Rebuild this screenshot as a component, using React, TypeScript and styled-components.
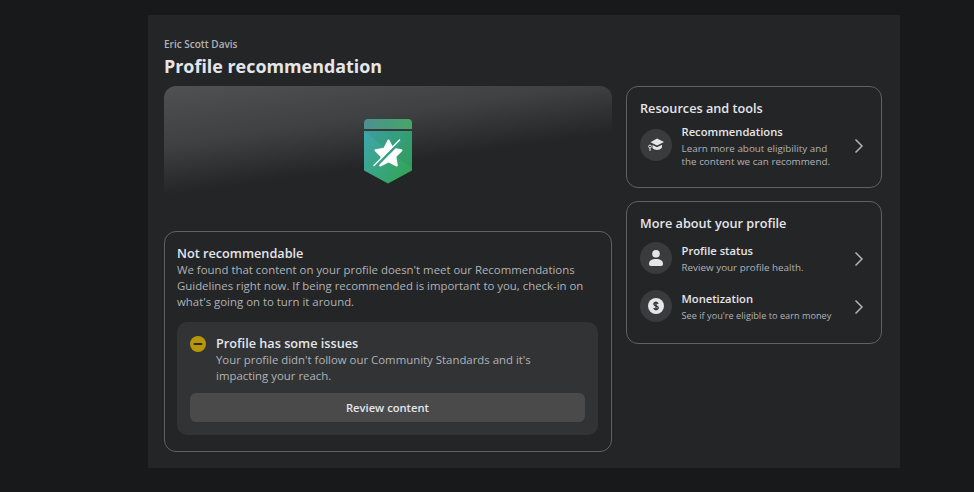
import React from "react";
import styled, { createGlobalStyle } from "styled-components";

const Global = createGlobalStyle`
  html, body { margin: 0; padding: 0; background: #18191a; height: 100%; overflow: hidden; }
  body { font-family: "Open Sans", "Noto Sans", "Liberation Sans", sans-serif; }
  * { box-sizing: border-box; }
`;

const Page = styled.div`
  width: 974px;
  height: 492px;
  padding: 15px 74px 24px 148px;
`;

const Panel = styled.main`
  width: 752px;
  height: 453px;
  background: #242526;
  padding: 23px 18px 16px 16px;
`;

const Owner = styled.div`
  font-size: 10px;
  line-height: 12px;
  font-weight: 600;
  color: #b0b3b8;
`;

const Title = styled.h1`
  margin: 3px 0 7px;
  font-size: 17.9px;
  line-height: 26px;
  font-weight: 700;
  color: #e4e6eb;
`;

const Columns = styled.div`
  display: grid;
  grid-template-columns: 448px 256px;
  column-gap: 14px;
`;

const LeftColumn = styled.div`
  display: flex;
  flex-direction: column;
  gap: 5px;
`;

const RightColumn = styled.div`
  display: flex;
  flex-direction: column;
  gap: 13px;
`;

const Hero = styled.div`
  height: 140px;
  border-radius: 12px 12px 0 0;
  background: linear-gradient(172deg, #505153 0%, #3f4042 30%, #242526 54%);
  display: flex;
  justify-content: center;
  padding-top: 33px;
`;

const Card = styled.section`
  border: 1px solid #606164;
  border-radius: 12px;
`;

const StatusCard = styled(Card)`
  height: 221px;
  padding: 13px 13px 16px 12px;
`;

const CardHeading = styled.h2`
  margin: 0;
  font-size: 12.7px;
  line-height: 17px;
  font-weight: 600;
  color: #e4e6eb;
`;

const BodyText = styled.p`
  margin: 0;
  font-size: 11.4px;
  line-height: 16px;
  color: #b0b3b8;
`;

const IssueBox = styled.div`
  margin-top: 12px;
  height: 113px;
  border-radius: 10px;
  background: #323335;
  padding: 13px;
`;

const IssueRow = styled.div`
  display: flex;
  gap: 10px;
`;

const IssueText = styled.div`
  flex: 1;
`;

const IssueIconSlot = styled.div`
  width: 16px;
  height: 16px;
  flex: none;
`;

const ReviewButton = styled.button`
  display: block;
  width: 100%;
  height: 29px;
  margin-top: 9px;
  border: 0;
  border-radius: 6px;
  background: #4a4a4b;
  color: #e4e6eb;
  font-family: inherit;
  font-size: 11.2px;
  font-weight: 600;
`;

const ToolsCard = styled(Card)<{ $height: number }>`
  height: ${(p) => p.$height}px;
  padding: 13px 13px 0;
`;

const ItemList = styled.div<{ $top: number }>`
  display: flex;
  flex-direction: column;
  gap: 16px;
  margin-top: ${(p) => p.$top}px;
`;

const Item = styled.div`
  display: flex;
  align-items: center;
  min-height: 32px;
`;

const IconCircle = styled.div`
  width: 32px;
  height: 32px;
  border-radius: 50%;
  background: #3a3b3c;
  display: flex;
  align-items: center;
  justify-content: center;
  flex: none;
`;

const ItemText = styled.div<{ $pad?: number }>`
  margin-left: 9.5px;
  flex: 1;
  padding-top: ${(p) => p.$pad ?? 0}px;
`;

const ItemTitle = styled.div`
  font-size: 11.2px;
  line-height: 16px;
  margin-bottom: 2px;
  font-weight: 600;
  color: #e4e6eb;
`;

const ItemSub = styled.div<{ $size?: number }>`
  font-size: ${(p) => p.$size ?? 9.85}px;
  line-height: 13px;
  color: #b0b3b8;
`;

const Chevron = styled.svg`
  width: 10px;
  height: 16px;
  flex: none;
  margin: 2px 4px 0 0;
`;

const ChevronRight = () => (
  <Chevron viewBox="0 0 10 16" fill="none">
    <path d="M1.500 1.500 L8 8 L1.500 14.500" stroke="#b0b3b8" strokeWidth="1.500" />
  </Chevron>
);

const CapIcon = () => (
  <svg width="18" height="16" viewBox="0 0 18 16">
    <path d="M10 1.500 17 5 10 8.500 3.500 5.200Z" fill="#e4e6eb" />
    <path d="M5.500 8 10 10.200 15 7.800V10.500C13.500 12.300 11.800 13 10 13 8.300 13 6.800 12.500 5.500 11.300Z" fill="#e4e6eb" />
    <circle cx="3" cy="9.500" r="1.400" fill="none" stroke="#e4e6eb" strokeWidth="1" />
    <path d="M3 11V14" stroke="#e4e6eb" strokeWidth="1" />
  </svg>
);

const PersonIcon = () => (
  <svg width="16" height="18" viewBox="0 0 16 18">
    <circle cx="8" cy="4.800" r="3.800" fill="#e4e6eb" />
    <path d="M1 15C1 11.500 3.500 10 8 10 12.500 10 15 11.500 15 15 15 16.200 14.300 17 13 17H3C1.700 17 1 16.200 1 15Z" fill="#e4e6eb" />
  </svg>
);

const DollarIcon = () => (
  <svg width="16" height="16" viewBox="0 0 18 18">
    <circle cx="9" cy="9" r="9" fill="#e4e6eb" />
    <path
      d="M11.400 6.600C11 5.600 10.100 5.100 9 5.100 7.600 5.100 6.700 5.900 6.700 7 6.700 9.600 11.500 8.300 11.500 11 11.500 12.100 10.500 12.900 9 12.900 7.800 12.900 6.900 12.300 6.500 11.300M9 3.800V14.200"
      fill="none"
      stroke="#303132"
      strokeWidth="1.500"
    />
  </svg>
);

const MinusIcon = () => (
  <svg width="16" height="16" viewBox="0 0 16 16">
    <circle cx="8" cy="8" r="8" fill="#b8960c" />
    <rect x="3.500" y="7" width="9" height="2" rx="1" fill="#2c2b20" />
  </svg>
);

const Badge = () => (
  <svg width="48" height="66" viewBox="0 0 48 66">
    <defs>
      <linearGradient id="badgeTop" x1="0" y1="0" x2="1" y2="0">
        <stop offset="0" stopColor="#4d8f92" />
        <stop offset="1" stopColor="#45a765" />
      </linearGradient>
      <linearGradient id="badgeBody" x1="0" y1="0" x2="1" y2="0.7">
        <stop offset="0" stopColor="#3ea6ad" />
        <stop offset="1" stopColor="#33a559" />
      </linearGradient>
    </defs>
    <path d="M0 10V4Q0 0 4 0H44Q48 0 48 4V10Z" fill="url(#badgeTop)" />
    <path d="M0 12H48V51.500L24 64.500 0 51.500Z" fill="url(#badgeBody)" />
    <path d="M0 12H48V50Z" fill="#2c6f5a" opacity="0.14" />
    <path
      d="M24.500 21.500 L28.800 29.800 L37.500 31.300 L31.300 37.500 L32.800 46.500 L24.500 42.300 L16.200 46.500 L17.700 37.500 L11.500 31.300 L20.200 29.800 Z"
      fill="#fff"
      stroke="#fff"
      strokeWidth="2"
      strokeLinejoin="round"
    />
    <path d="M11 48 L37 22" stroke="#3c9f8c" strokeWidth="2.600" />
    <path d="M9.500 47 L36 20.500" stroke="#fff" strokeWidth="1.300" />
  </svg>
);

export default function App() {
  return (
    <Page>
      <Global />
      <Panel>
        <Owner>Eric Scott Davis</Owner>
        <Title>Profile recommendation</Title>
        <Columns>
          <LeftColumn>
            <Hero>
              <Badge />
            </Hero>
            <StatusCard>
              <CardHeading>Not recommendable</CardHeading>
              <BodyText>
                We found that content on your profile doesn't meet our Recommendations Guidelines right now. If being
                recommended is important to you, check-in on what's going on to turn it around.
              </BodyText>
              <IssueBox>
                <IssueRow>
                  <IssueIconSlot>
                    <MinusIcon />
                  </IssueIconSlot>
                  <IssueText>
                    <CardHeading>Profile has some issues</CardHeading>
                    <BodyText>
                      Your profile didn't follow our Community Standards and it's
                      <br />
                      impacting your reach.
                    </BodyText>
                  </IssueText>
                </IssueRow>
                <ReviewButton>Review content</ReviewButton>
              </IssueBox>
            </StatusCard>
          </LeftColumn>
          <RightColumn>
            <ToolsCard $height={102}>
              <CardHeading>Resources and tools</CardHeading>
              <ItemList $top={5}>
                <Item>
                  <IconCircle>
                    <CapIcon />
                  </IconCircle>
                  <ItemText $pad={2}>
                    <ItemTitle>Recommendations</ItemTitle>
                    <ItemSub>
                      Learn more about eligibility and
                      <br />
                      the content we can recommend.
                    </ItemSub>
                  </ItemText>
                  <ChevronRight />
                </Item>
              </ItemList>
            </ToolsCard>
            <ToolsCard $height={143}>
              <CardHeading>More about your profile</CardHeading>
              <ItemList $top={10}>
                <Item>
                  <IconCircle>
                    <PersonIcon />
                  </IconCircle>
                  <ItemText>
                    <ItemTitle>Profile status</ItemTitle>
                    <ItemSub>Review your profile health.</ItemSub>
                  </ItemText>
                  <ChevronRight />
                </Item>
                <Item>
                  <IconCircle>
                    <DollarIcon />
                  </IconCircle>
                  <ItemText>
                    <ItemTitle>Monetization</ItemTitle>
                    <ItemSub $size={9.2}>See if you're eligible to earn money</ItemSub>
                  </ItemText>
                  <ChevronRight />
                </Item>
              </ItemList>
            </ToolsCard>
          </RightColumn>
        </Columns>
      </Panel>
    </Page>
  );
}
